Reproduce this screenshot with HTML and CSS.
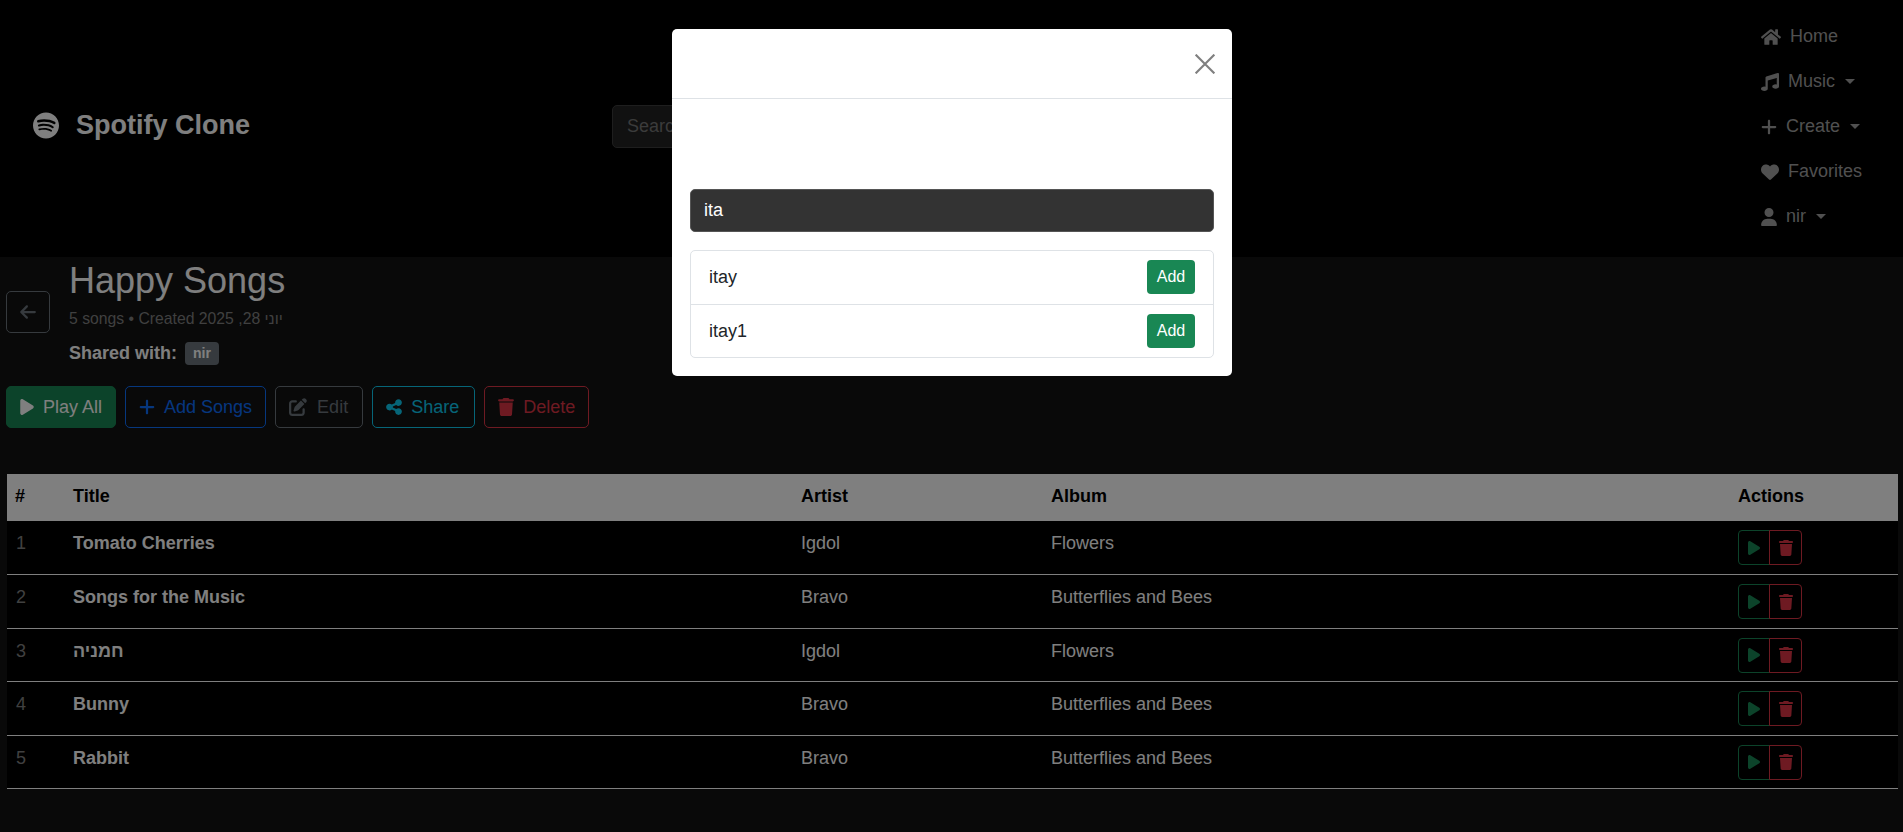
FILE: index.html
```html
<!DOCTYPE html>
<html lang="en">
<head>
  <meta charset="UTF-8">
  <title>Spotify Clone</title>
  <meta name="viewport" content="width=device-width, initial-scale=1.0">
  <link rel="stylesheet" href="styles.css">
</head>
<body>
  <svg class="icon-sheet" aria-hidden="true">
    <symbol id="i-spotify" viewBox="0 0 496 512"><path d="M248 8C111.1 8 0 119.1 0 256s111.1 248 248 248 248-111.1 248-248S384.9 8 248 8zm100.7 364.9c-4.2 0-6.8-1.3-10.7-3.6-62.4-37.6-135-39.2-206.7-24.5-3.9 1-9 2.6-11.9 2.6-9.7 0-15.8-7.7-15.8-15.8 0-10.3 6.1-15.2 13.6-16.8 81.9-18.1 165.6-16.5 237 26.2 6.1 3.9 9.7 7.4 9.7 16.5s-7.1 15.4-15.2 15.4zm26.9-65.6c-5.2 0-8.7-2.3-12.3-4.2-62.5-37-155.7-51.9-238.6-29.4-4.8 1.3-7.4 2.6-11.9 2.6-10.7 0-19.4-8.7-19.4-19.4s5.2-17.8 15.5-20.7c27.8-7.8 56.2-13.6 97.8-13.6 64.9 0 127.6 16.1 177 45.5 8.1 4.8 11.3 11 11.3 19.7-.1 10.8-8.5 19.5-19.4 19.5zm31-76.2c-5.2 0-8.4-1.3-12.9-3.9-71.2-42.5-198.5-52.7-280.9-29.7-3.6 1-8.1 2.6-12.9 2.6-13.2 0-23.3-10.3-23.3-23.6 0-13.6 8.4-21.3 17.4-23.9 35.2-10.3 74.6-15.2 117.5-15.2 73 0 149.5 15.2 205.4 47.8 7.8 4.5 12.9 10.7 12.9 22.6 0 13.6-11 23.3-23.2 23.3z"/></symbol>
    <symbol id="i-home" viewBox="0 0 576 512"><path d="M280.37 148.26L96 300.11V464a16 16 0 0 0 16 16l112.06-.29a16 16 0 0 0 15.92-16V368a16 16 0 0 1 16-16h64a16 16 0 0 1 16 16v95.64a16 16 0 0 0 16 16.05L464 480a16 16 0 0 0 16-16V300L295.67 148.26a12.19 12.19 0 0 0-15.3 0zM571.6 251.47L488 182.56V44.05a12 12 0 0 0-12-12h-56a12 12 0 0 0-12 12v72.61L318.47 43a48 48 0 0 0-61 0L4.34 251.47a12 12 0 0 0-1.6 16.9l25.5 31A12 12 0 0 0 45.15 301l235.22-193.74a12.19 12.19 0 0 1 15.3 0L530.9 301a12 12 0 0 0 16.9-1.6l25.5-31a12 12 0 0 0-1.7-16.93z"/></symbol>
    <symbol id="i-music" viewBox="0 0 512 512"><path d="M470.38 1.51L150.41 96A32 32 0 0 0 128 126.51v261.41A139 139 0 0 0 96 384c-53 0-96 28.66-96 64s43 64 96 64 96-28.66 96-64V214.32l256-75v184.61a138.4 138.4 0 0 0-32-3.93c-53 0-96 28.66-96 64s43 64 96 64 96-28.65 96-64V32a32 32 0 0 0-41.62-30.49z"/></symbol>
    <symbol id="i-plus" viewBox="0 0 448 512"><path d="M256 80c0-17.7-14.3-32-32-32s-32 14.3-32 32V224H48c-17.7 0-32 14.3-32 32s14.3 32 32 32H192V432c0 17.7 14.3 32 32 32s32-14.3 32-32V288H400c17.7 0 32-14.3 32-32s-14.3-32-32-32H256V80z"/></symbol>
    <symbol id="i-heart" viewBox="0 0 512 512"><path d="M47.6 300.4L228.3 469.1c7.5 7 17.4 10.9 27.7 10.9s20.2-3.9 27.7-10.9L464.4 300.4c30.4-28.3 47.6-68 47.6-109.5v-5.8c0-69.9-50.5-129.5-119.4-141C347 36.5 300.6 51.4 268 84L256 96 244 84c-32.6-32.6-79-47.5-124.6-39.9C50.5 55.6 0 115.2 0 185.1v5.8c0 41.5 17.2 81.2 47.6 109.5z"/></symbol>
    <symbol id="i-user" viewBox="0 0 448 512"><path d="M224 256A128 128 0 1 0 224 0a128 128 0 1 0 0 256zm-45.7 48C79.8 304 0 383.8 0 482.3C0 498.7 13.3 512 29.7 512H418.3c16.4 0 29.7-13.3 29.7-29.7C448 383.8 368.2 304 269.7 304H178.3z"/></symbol>
    <symbol id="i-play" viewBox="0 0 384 512"><path d="M73 39c-14.8-9.1-33.4-9.4-48.5-.9S0 62.6 0 80V432c0 17.4 9.4 33.4 24.5 41.9s33.7 8.1 48.5-.9L361 297c14.3-8.7 23-24.2 23-41s-8.7-32.2-23-41L73 39z"/></symbol>
    <symbol id="i-back" viewBox="0 0 448 512"><path d="M9.4 233.4c-12.5 12.5-12.5 32.8 0 45.3l160 160c12.5 12.5 32.8 12.5 45.3 0s12.5-32.8 0-45.3L109.2 288 416 288c17.7 0 32-14.3 32-32s-14.3-32-32-32l-306.7 0L214.6 118.6c12.5-12.5 12.5-32.8 0-45.3s-32.8-12.5-45.3 0l-160 160z"/></symbol>
    <symbol id="i-edit" viewBox="0 0 512 512"><path d="M471.6 21.7c-21.9-21.9-57.3-21.9-79.2 0L362.3 51.7l97.9 97.9 30.1-30.1c21.9-21.9 21.9-57.3 0-79.2L471.6 21.7zm-299.2 220c-6.1 6.1-10.8 13.6-13.5 21.9l-29.6 88.8c-2.9 8.6-.6 18.1 5.8 24.6s15.9 8.7 24.6 5.8l88.8-29.6c8.2-2.7 15.7-7.4 21.9-13.5L437.7 172.3 339.7 74.3 172.4 241.7zM96 64C43 64 0 107 0 160V416c0 53 43 96 96 96H352c53 0 96-43 96-96V320c0-17.7-14.3-32-32-32s-32 14.3-32 32v96c0 17.7-14.3 32-32 32H96c-17.7 0-32-14.3-32-32V160c0-17.7 14.3-32 32-32h96c17.7 0 32-14.3 32-32s-14.3-32-32-32H96z"/></symbol>
    <symbol id="i-share" viewBox="0 0 448 512"><path d="M352 224c53 0 96-43 96-96s-43-96-96-96s-96 43-96 96c0 4 .2 8 .7 11.9l-94.1 47C145.4 170.2 121.9 160 96 160c-53 0-96 43-96 96s43 96 96 96c25.9 0 49.4-10.2 66.6-26.9l94.1 47c-.5 3.9-.7 7.8-.7 11.9c0 53 43 96 96 96s96-43 96-96s-43-96-96-96c-25.9 0-49.4 10.2-66.6 26.9l-94.1-47c.5-3.9 .7-7.8 .7-11.9s-.2-8-.7-11.9l94.1-47C302.6 213.8 326.1 224 352 224z"/></symbol>
    <symbol id="i-trash" viewBox="0 0 448 512"><path d="M135.2 17.7L128 32H32C14.3 32 0 46.3 0 64S14.3 96 32 96H416c17.7 0 32-14.3 32-32s-14.3-32-32-32H320l-7.2-14.3C307.4 6.8 296.3 0 284.2 0H163.8c-12.1 0-23.2 6.8-28.6 17.7zM416 128H32L53.2 467c1.6 25.3 22.6 45 47.9 45H346.9c25.3 0 46.3-19.7 47.9-45L416 128z"/></symbol>
  </svg>

  <nav class="navbar">
    <a class="brand" href="#"><svg class="brand-icon"><use href="#i-spotify"/></svg>Spotify Clone</a>
    <input class="search" type="text" placeholder="Search songs...">
    <ul class="nav-list">
      <li><a href="#"><svg class="icon w-20"><use href="#i-home"/></svg>Home</a></li>
      <li><a class="caret" href="#"><svg class="icon w-18"><use href="#i-music"/></svg>Music</a></li>
      <li><a class="caret" href="#"><svg class="icon w-16"><use href="#i-plus"/></svg>Create</a></li>
      <li><a href="#"><svg class="icon w-18"><use href="#i-heart"/></svg>Favorites</a></li>
      <li><a class="caret" href="#"><svg class="icon w-16"><use href="#i-user"/></svg>nir</a></li>
    </ul>
  </nav>

  <main class="page">
    <section class="playlist-head">
      <button class="btn btn-back"><svg class="icon w-16"><use href="#i-back"/></svg></button>
      <div>
        <h1>Happy Songs</h1>
        <p class="meta">5 songs • Created 2025 ,28 יוני</p>
        <p class="shared"><strong>Shared with:</strong> <span class="badge">nir</span></p>
      </div>
    </section>

    <div class="actions">
      <button class="btn btn-green"><svg class="icon w-14"><use href="#i-play"/></svg>Play All</button>
      <button class="btn btn-blue"><svg class="icon w-16"><use href="#i-plus"/></svg>Add Songs</button>
      <button class="btn btn-gray"><svg class="icon w-18"><use href="#i-edit"/></svg>Edit</button>
      <button class="btn btn-cyan"><svg class="icon w-16"><use href="#i-share"/></svg>Share</button>
      <button class="btn btn-red"><svg class="icon w-16"><use href="#i-trash"/></svg>Delete</button>
    </div>

    <table class="songs">
      <thead>
        <tr><th class="col-num">#</th><th class="col-title">Title</th><th class="col-artist">Artist</th><th class="col-album">Album</th><th>Actions</th></tr>
      </thead>
      <tbody>
        <tr>
          <td class="num">1</td><td class="title">Tomato Cherries</td><td>Igdol</td><td>Flowers</td>
          <td class="cell-btns"><div class="row-btns"><button class="row-play"><svg><use href="#i-play"/></svg></button><button class="row-del"><svg><use href="#i-trash"/></svg></button></div></td>
        </tr>
        <tr>
          <td class="num">2</td><td class="title">Songs for the Music</td><td>Bravo</td><td>Butterflies and Bees</td>
          <td class="cell-btns"><div class="row-btns"><button class="row-play"><svg><use href="#i-play"/></svg></button><button class="row-del"><svg><use href="#i-trash"/></svg></button></div></td>
        </tr>
        <tr>
          <td class="num">3</td><td class="title">חמניה</td><td>Igdol</td><td>Flowers</td>
          <td class="cell-btns"><div class="row-btns"><button class="row-play"><svg><use href="#i-play"/></svg></button><button class="row-del"><svg><use href="#i-trash"/></svg></button></div></td>
        </tr>
        <tr>
          <td class="num">4</td><td class="title">Bunny</td><td>Bravo</td><td>Butterflies and Bees</td>
          <td class="cell-btns"><div class="row-btns"><button class="row-play"><svg><use href="#i-play"/></svg></button><button class="row-del"><svg><use href="#i-trash"/></svg></button></div></td>
        </tr>
        <tr>
          <td class="num">5</td><td class="title">Rabbit</td><td>Bravo</td><td>Butterflies and Bees</td>
          <td class="cell-btns"><div class="row-btns"><button class="row-play"><svg><use href="#i-play"/></svg></button><button class="row-del"><svg><use href="#i-trash"/></svg></button></div></td>
        </tr>
      </tbody>
    </table>
  </main>

  <div class="backdrop"></div>

  <div class="modal">
    <div class="modal-header">
      <button class="close" aria-label="Close">
        <svg viewBox="0 0 16 16"><path d="M.5.5l15 15M15.5.5l-15 15"/></svg>
      </button>
    </div>
    <div class="modal-body">
      <input class="user-search" type="text" value="ita">
      <ul class="user-list">
        <li>itay<button class="btn-add">Add</button></li>
        <li>itay1<button class="btn-add">Add</button></li>
      </ul>
    </div>
  </div>
</body>
</html>
```

FILE: styles.css
```css
* { box-sizing: border-box; }
body {
  margin: 0;
  background: #121212;
  color: #fff;
  font-family: "Liberation Sans", "Noto Sans CJK KR", sans-serif;
  font-size: 18px;
  line-height: 1.5;
}
a { color: inherit; text-decoration: none; }
ul { list-style: none; margin: 0; padding: 0; }
.icon-sheet { display: none; }

/* navbar */
.navbar {
  display: flex;
  align-items: center;
  height: 257px;
  background: #000;
  padding: 0 33px 4px;
}
.brand {
  display: flex;
  align-items: center;
  gap: 17px;
  width: 579px;
  margin-bottom: 3px;
  font-size: 27px;
  font-weight: bold;
}
.brand-icon { width: 26px; height: 27px; fill: currentColor; }
.search {
  width: 500px;
  height: 43px;
  padding: 6px 14px;
  border: 1px solid #3c3c3c;
  border-radius: 5px;
  background: #222;
  color: #fff;
  font: inherit;
}
.search::placeholder { color: #777; }
.nav-list { margin-left: auto; width: 109px; color: #a0a0a0; }
.nav-list li { height: 45px; display: flex; align-items: center; }
.nav-list a { display: flex; align-items: center; }
.icon { height: 18px; margin-right: 9px; fill: currentColor; flex: none; }
.w-14 { width: 14px; }
.w-16 { width: 16px; }
.w-18 { width: 18px; }
.w-20 { width: 20px; }
.caret::after {
  content: "";
  margin-left: 10px;
  border-top: 5px solid;
  border-left: 5px solid transparent;
  border-right: 5px solid transparent;
}

/* playlist header */
.page { padding: 0 5px 0 6px; }
.playlist-head { display: flex; align-items: center; gap: 19px; }
h1 { margin: 0; font-size: 36px; font-weight: 400; line-height: 47px; }
.meta { margin: 4px 0 0; font-size: 15.75px; line-height: 22px; color: #808080; }
.shared { margin: 10px 0 0; line-height: 27px; }
.badge {
  display: inline-block;
  margin-left: 3px;
  padding: 0 8px;
  border-radius: 4px;
  background: #6c757d;
  font-size: 14px;
  font-weight: bold;
  line-height: 23px;
  vertical-align: 1px;
}

/* buttons */
.btn {
  display: inline-flex;
  align-items: center;
  height: 42px;
  padding: 0 13px;
  border: 1px solid;
  border-radius: 5px;
  background: none;
  font: inherit;
  color: inherit;
}
.btn-back { width: 44px; justify-content: center; color: #6c757d; border-color: #6c757d; padding: 0; }
.btn-back .icon { margin: 0; }
.actions { display: flex; gap: 9px; margin-top: 19px; }
.btn-green { background: #198754; border-color: #198754; color: #fff; }
.btn-blue { color: #0d6efd; }
.btn-gray { color: #6c757d; padding-right: 14px; }
.btn-gray .icon { margin-right: 10px; }
.btn-cyan { color: #0dcaf0; padding-right: 15px; }
.btn-red { color: #dc3545; }

/* songs table */
.songs {
  width: 1891px;
  margin: 46px 0 0 1px;
  border-collapse: collapse;
  background: #000;
  table-layout: fixed;
}
.songs th {
  height: 47px;
  padding: 0 8px 2px;
  background: #fff;
  color: #000;
  text-align: left;
}
.col-num { width: 58px; }
.col-title { width: 728px; }
.col-artist { width: 250px; }
.col-album { width: 687px; }
.songs td {
  height: 53.6px;
  padding: 9px 8px 8px;
  vertical-align: top;
  border-bottom: 1px solid #fff;
}
.songs .num { padding-left: 9px; color: #808080; }
.songs .title { font-weight: bold; }
.row-btns { display: flex; width: 64px; height: 35px; }
.row-btns button {
  display: flex;
  align-items: center;
  justify-content: center;
  padding: 0;
  background: none;
  border: 1px solid;
}
.row-btns svg { width: 14px; height: 16px; fill: currentColor; }
.row-play { width: 32px; color: #198754; border-radius: 4px 0 0 4px; }
.row-del { width: 33px; color: #dc3545; border-radius: 0 4px 4px 0; margin-left: -1px; }

/* modal */
.backdrop {
  position: fixed;
  top: 0;
  left: 0;
  right: 0;
  bottom: 0;
  background: rgba(0, 0, 0, 0.5);
}
.modal {
  position: fixed;
  top: 29px;
  left: 672px;
  width: 560px;
  height: 347px;
  background: #fff;
  border-radius: 5px;
  color: #212529;
}
.modal-header {
  display: flex;
  align-items: center;
  justify-content: flex-end;
  height: 70px;
  padding: 0 17px;
  border-bottom: 1px solid #dee2e6;
}
.close { width: 20px; height: 20px; padding: 0; background: none; border: none; }
.close svg { display: block; stroke: #7f7f7f; stroke-width: 1.7; fill: none; }
.modal-body { padding: 90px 18px 0; }
.user-search {
  display: block;
  width: 100%;
  height: 43px;
  padding: 6px 13px;
  border: 1px solid #555;
  border-radius: 5px;
  background: #333;
  color: #fff;
  font: inherit;
}
.user-list {
  margin-top: 18px;
  border: 1px solid #dee2e6;
  border-radius: 5px;
}
.user-list li {
  display: flex;
  align-items: center;
  justify-content: space-between;
  height: 53px;
  padding: 0 18px;
}
.user-list li + li { border-top: 1px solid #dee2e6; }
.btn-add {
  width: 48px;
  height: 34px;
  margin-bottom: 1px;
  padding: 0;
  border: none;
  border-radius: 4px;
  background: #198754;
  color: #fff;
  font: inherit;
  font-size: 16px;
}
```
